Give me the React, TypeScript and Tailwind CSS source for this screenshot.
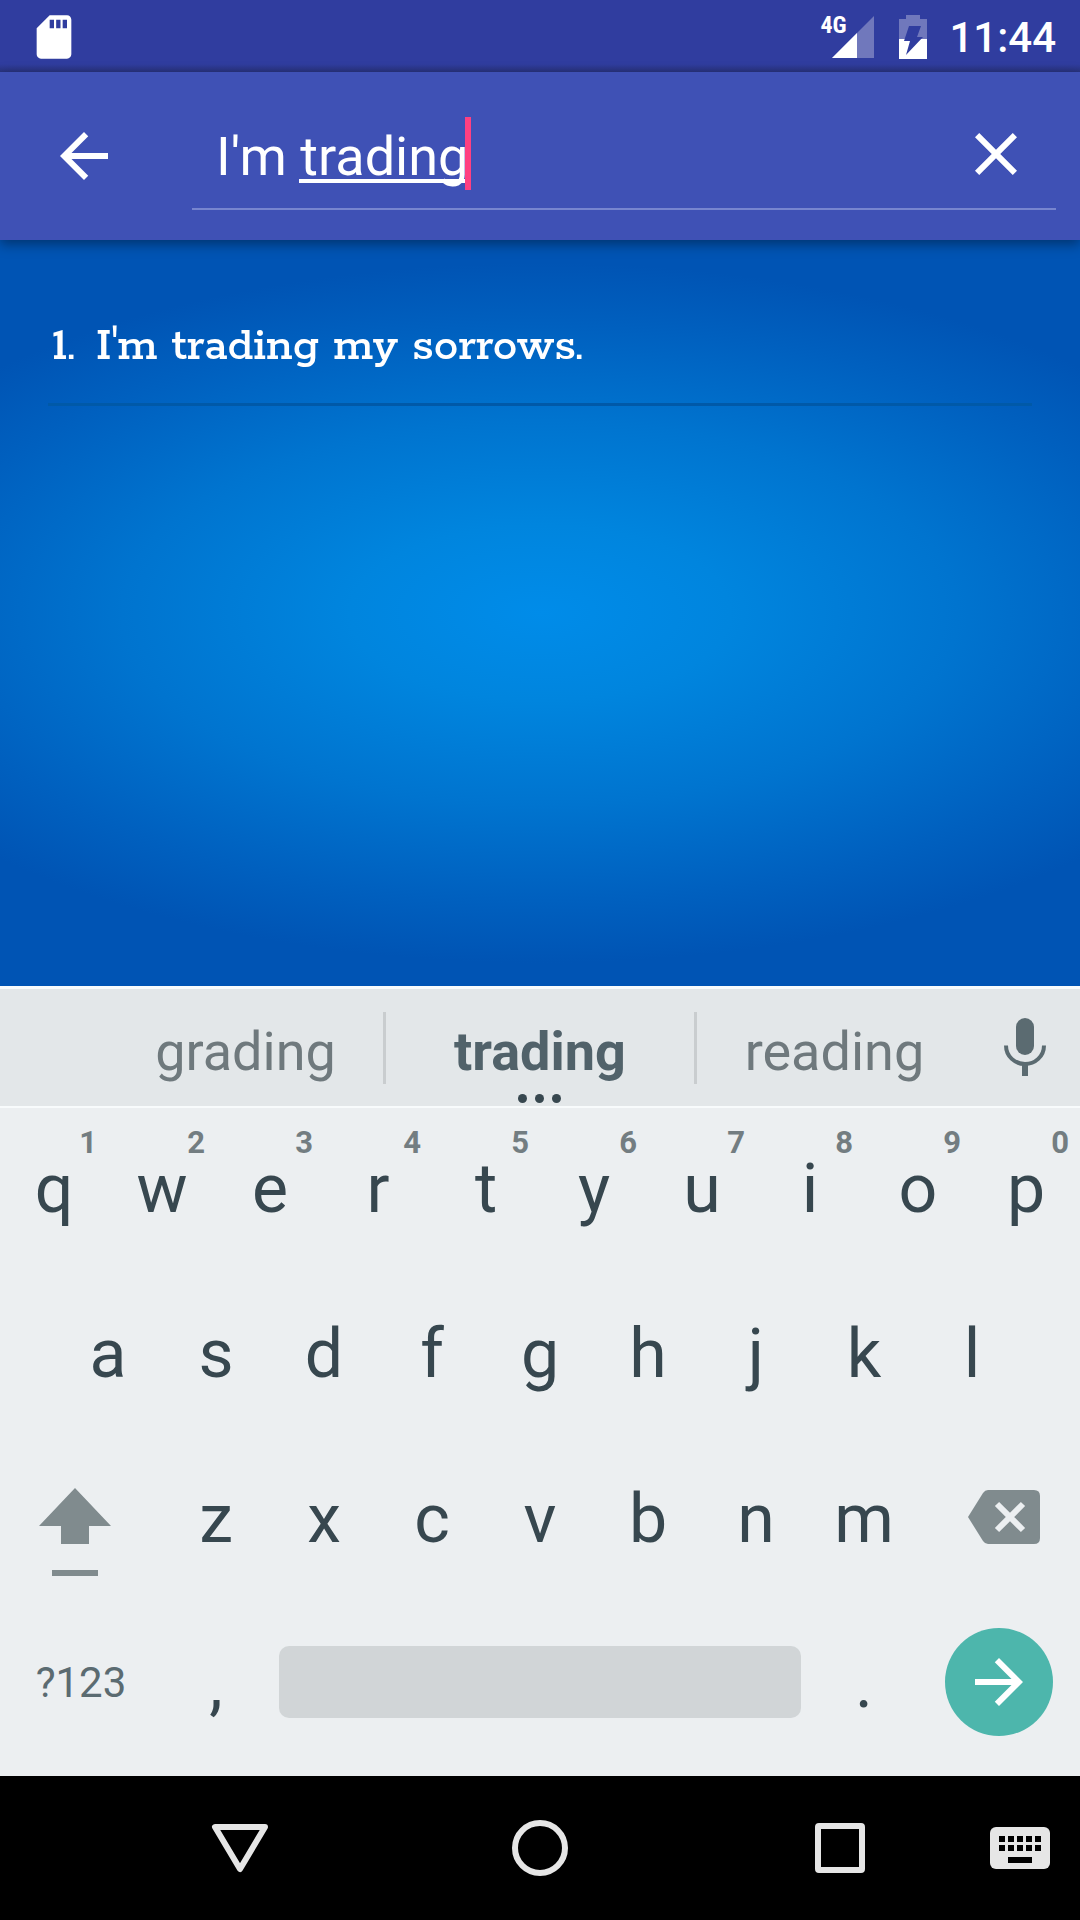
import { useState } from 'react';

const topRow = [
  ['q', '1'], ['w', '2'], ['e', '3'], ['r', '4'], ['t', '5'],
  ['y', '6'], ['u', '7'], ['i', '8'], ['o', '9'], ['p', '0'],
];
const middleRow = ['a', 's', 'd', 'f', 'g', 'h', 'j', 'k', 'l'];
const bottomRow = ['z', 'x', 'c', 'v', 'b', 'n', 'm'];

function StatusBar() {
  return (
    <div className="flex h-[72px] items-center justify-between bg-[linear-gradient(#303d9f_0,#303d9f_64px,#293480_72px)] px-6 pt-0.5 text-white">
      <svg viewBox="0 0 24 24" className="ml-1 size-[52px]" fill="currentColor" aria-label="SD card" role="img">
        <path d="M18 2h-8L4 8v12c0 1.1.9 2 2 2h12c1.1 0 2-.9 2-2V4c0-1.1-.9-2-2-2zm-6 6h-2V4h2v4zm3 0h-2V4h2v4zm3 0h-2V4h2v4z" />
      </svg>
      <div className="flex items-center">
        <div className="relative mr-6 flex">
          <svg viewBox="0 0 54 44" className="h-11 w-[54px]" aria-hidden="true">
            <path d="M54 1v42H12z" fill="#7078bc" />
            <path d="M37 18v25H12z" fill="#fff" />
          </svg>
          <span className="absolute left-0 top-0 font-['Roboto_Condensed',Roboto,sans-serif] text-[24px] leading-5 font-bold">4G</span>
        </div>
        <svg viewBox="0 0 30 44" className="mr-[21px] h-11 w-[30px]" aria-label="Battery charging" role="img">
          <path d="M8 0h14v4h7v21H1V4h7z" fill="#7078bc" />
          <path d="M1 24h28v20H1z" fill="#fff" />
          <path d="M11 11h12l-4 11h6L8 40l4-14H6z" fill="#303d9f" />
        </svg>
        <span className="pt-0.5 text-[42px] leading-[50px] font-medium">11:44</span>
      </div>
    </div>
  );
}

function SearchBar() {
  const [query, setQuery] = useState("I'm trading");
  return (
    <header className="relative z-10 flex h-[168px] items-center bg-[#3f51b5] pr-6 text-white shadow-[0_4px_12px_rgba(0,0,0,0.4)]">
      <button type="button" aria-label="Back" className="ml-12 mr-[72px]">
        <svg viewBox="0 0 24 24" className="h-[72px] w-[72px]" fill="currentColor">
          <path d="M20 11H7.83l5.59-5.59L12 4l-8 8 8 8 1.41-1.41L7.83 13H20v-2z" />
        </svg>
      </button>
      <div className="relative mt-0.5 flex h-[106px] min-w-0 flex-1 items-center border-b-2 border-[#7785cf] pr-6">
        <input
          aria-label="Search songs"
          value={query}
          onChange={(e) => setQuery(e.target.value)}
          className="h-full min-w-0 flex-1 bg-transparent pl-6 text-[54px] leading-[64px] outline-none"
        />
        <span aria-hidden="true" className="absolute left-[107px] top-[75px] h-1 w-[167px] bg-white" />
        <span aria-hidden="true" className="absolute left-[273px] top-[13px] h-[73px] w-1.5 bg-[#ff4081]" />
        <button type="button" aria-label="Clear" onClick={() => setQuery('')} className="mb-1">
          <svg viewBox="0 0 24 24" className="h-[72px] w-[72px]" fill="currentColor">
            <path d="M19 6.41L17.59 5 12 10.59 6.41 5 5 6.41 10.59 12 5 17.59 6.41 19 12 13.41 17.59 19 19 17.59 13.41 12z" />
          </svg>
        </button>
      </div>
    </header>
  );
}

function Results() {
  return (
    <main className="flex-1 bg-[radial-gradient(ellipse_760px_350px_at_50%_50%,#008ce9_0%,#0085de_25%,#0074cf_55%,#0060bf_82%,#0054b4_100%)] px-12 py-6">
      <ul>
        <li className="border-b-[3px] border-[#0059a8]">
          <a href="#song-1" className="flex h-[139px] items-center pt-[26px] pl-1 font-['Rokkitt','DejaVu_Serif',serif] text-[49px] leading-[60px] font-medium text-white">
            <span className="w-11">1. </span>
            <span>I'm trading my sorrows.</span>
          </a>
        </li>
      </ul>
    </main>
  );
}

function Suggestions() {
  return (
    <div className="flex h-[122px] items-center border-t-[3px] border-b-2 border-[#f8fbfc] bg-[#e3e7e9] pl-[108px] text-[54px] leading-[64px] text-[#6f797d]">
      <button type="button" className="h-full flex-[276] pt-2">grading</button>
      <span className="h-[72px] w-[3px] bg-[#c9cdcf]" />
      <button type="button" className="relative h-full flex-[309] pt-2 font-bold text-[#51626a]">
        trading
        <span aria-hidden="true" className="absolute inset-x-0 bottom-[3px] flex justify-center gap-2">
          <i className="size-[9px] rounded-full bg-[#37474f]" />
          <i className="size-[9px] rounded-full bg-[#37474f]" />
          <i className="size-[9px] rounded-full bg-[#37474f]" />
        </span>
      </button>
      <span className="h-[72px] w-[3px] bg-[#c9cdcf]" />
      <button type="button" className="h-full flex-[276] pt-2">reading</button>
      <button type="button" aria-label="Voice input" className="flex w-[108px] justify-center pr-0.5 pb-0.5 text-[#5b6b71]">
        <svg viewBox="0 0 42 58" className="h-[58px] w-[42px]">
          <rect x="12" y="0" width="18" height="37" rx="9" fill="currentColor" />
          <path d="M2 27.500c0 11 9 18.500 19 18.500s19-7.500 19-18.500" fill="none" stroke="currentColor" strokeWidth="4" />
          <path d="M18 46h6v12h-6z" fill="currentColor" />
        </svg>
      </button>
    </div>
  );
}

function Key({ label, hint }: { label: string; hint?: string }) {
  return (
    <button type="button" className="relative flex items-center justify-center pb-3">
      {label}
      {hint && (
        <span className="absolute top-[15px] right-[11px] text-[31px] leading-8 font-bold text-[#737d81]">{hint}</span>
      )}
    </button>
  );
}

function Keyboard() {
  return (
    <section aria-label="Keyboard" className="bg-[#eceff1] text-[#37474f]">
      <Suggestions />
      <div className="flex flex-col py-1 text-[68px] leading-[80px]">
        <div className="grid h-[165px] grid-cols-10">
          {topRow.map(([k, n]) => <Key key={k} label={k} hint={n} />)}
        </div>
        <div className="grid h-[165px] grid-cols-[1fr_repeat(9,2fr)_1fr]">
          <span />
          {middleRow.map((k) => <Key key={k} label={k} />)}
          <span />
        </div>
        <div className="grid h-[165px] grid-cols-[3fr_repeat(7,2fr)_3fr]">
          <button type="button" aria-label="Shift" className="flex items-center justify-center pr-3 pb-4 text-[#808b8e]">
            <svg viewBox="0 0 72 144" className="h-36 w-[72px]" fill="currentColor">
              <path d="M36 43l36 38H50v18H22V81H0zM13 125h46v6H13z" />
            </svg>
          </button>
          {bottomRow.map((k) => <Key key={k} label={k} />)}
          <button type="button" aria-label="Delete" className="flex items-center justify-center pb-4 pl-2.5">
            <svg viewBox="0 0 72 54" className="h-[54px] w-[72px]">
              <path d="M20 0h46q6 0 6 6v42q0 6-6 6H20q-3 0-5-3L0 27 15 3q2-3 5-3z" fill="#808b8e" />
              <path d="M29 14l26 26M55 14L29 40" stroke="#eceff1" strokeWidth="6" />
            </svg>
          </button>
        </div>
        <div className="grid h-[165px] grid-cols-[3fr_2fr_10fr_2fr_3fr]">
          <button type="button" className="flex items-center justify-center pb-3.5 text-[42px] leading-[50px] text-[#5b6b71]">?123</button>
          <Key label="," />
          <div className="flex items-center px-[9px] pb-4">
            <button type="button" aria-label="Space" className="h-[72px] w-full rounded-[10px] bg-[#d1d5d7]" />
          </div>
          <Key label="." />
          <div className="flex items-center justify-center pb-4">
            <button type="button" aria-label="Go" className="flex size-[108px] items-center justify-center rounded-full bg-[#4db6ac] text-white">
              <svg viewBox="0 0 24 24" className="size-[72px]" fill="currentColor">
                <path d="M12 4l-1.410 1.410L16.170 11H4v2h12.170l-5.580 5.590L12 20l8-8z" />
              </svg>
            </button>
          </div>
        </div>
      </div>
    </section>
  );
}

function NavBar() {
  return (
    <nav aria-label="System navigation" className="grid h-36 grid-cols-[120fr_240fr_360fr_240fr_120fr] items-center bg-black text-[#e6e6e6]">
      <span />
      <button type="button" aria-label="Hide keyboard" className="flex justify-center">
        <svg viewBox="0 0 60 60" className="size-[60px]" fill="none" stroke="currentColor" strokeWidth="6" strokeLinejoin="round">
          <path d="M5 9h50L30 51z" />
        </svg>
      </button>
      <button type="button" aria-label="Home" className="flex justify-center">
        <svg viewBox="0 0 60 60" className="size-[60px]" fill="none" stroke="currentColor" strokeWidth="6">
          <circle cx="30" cy="30" r="25" />
        </svg>
      </button>
      <button type="button" aria-label="Recent apps" className="flex justify-center">
        <svg viewBox="0 0 60 60" className="size-[60px]" fill="none" stroke="currentColor" strokeWidth="6">
          <rect x="8" y="8" width="44" height="44" rx="1" />
        </svg>
      </button>
      <button type="button" aria-label="Switch keyboard" className="flex justify-center">
        <svg viewBox="0 0 60 42" className="h-[42px] w-[60px]">
          <rect width="60" height="42" rx="6" fill="currentColor" />
          <path d="M9 12h42M9 21h42" stroke="#000" strokeWidth="6" strokeDasharray="6 3" />
          <path d="M18 30h24v6H18z" fill="#000" />
        </svg>
      </button>
    </nav>
  );
}

export default function App() {
  return (
    <div className="flex min-h-screen flex-col font-[Roboto,sans-serif]">
      <StatusBar />
      <SearchBar />
      <Results />
      <Keyboard />
      <NavBar />
    </div>
  );
}
